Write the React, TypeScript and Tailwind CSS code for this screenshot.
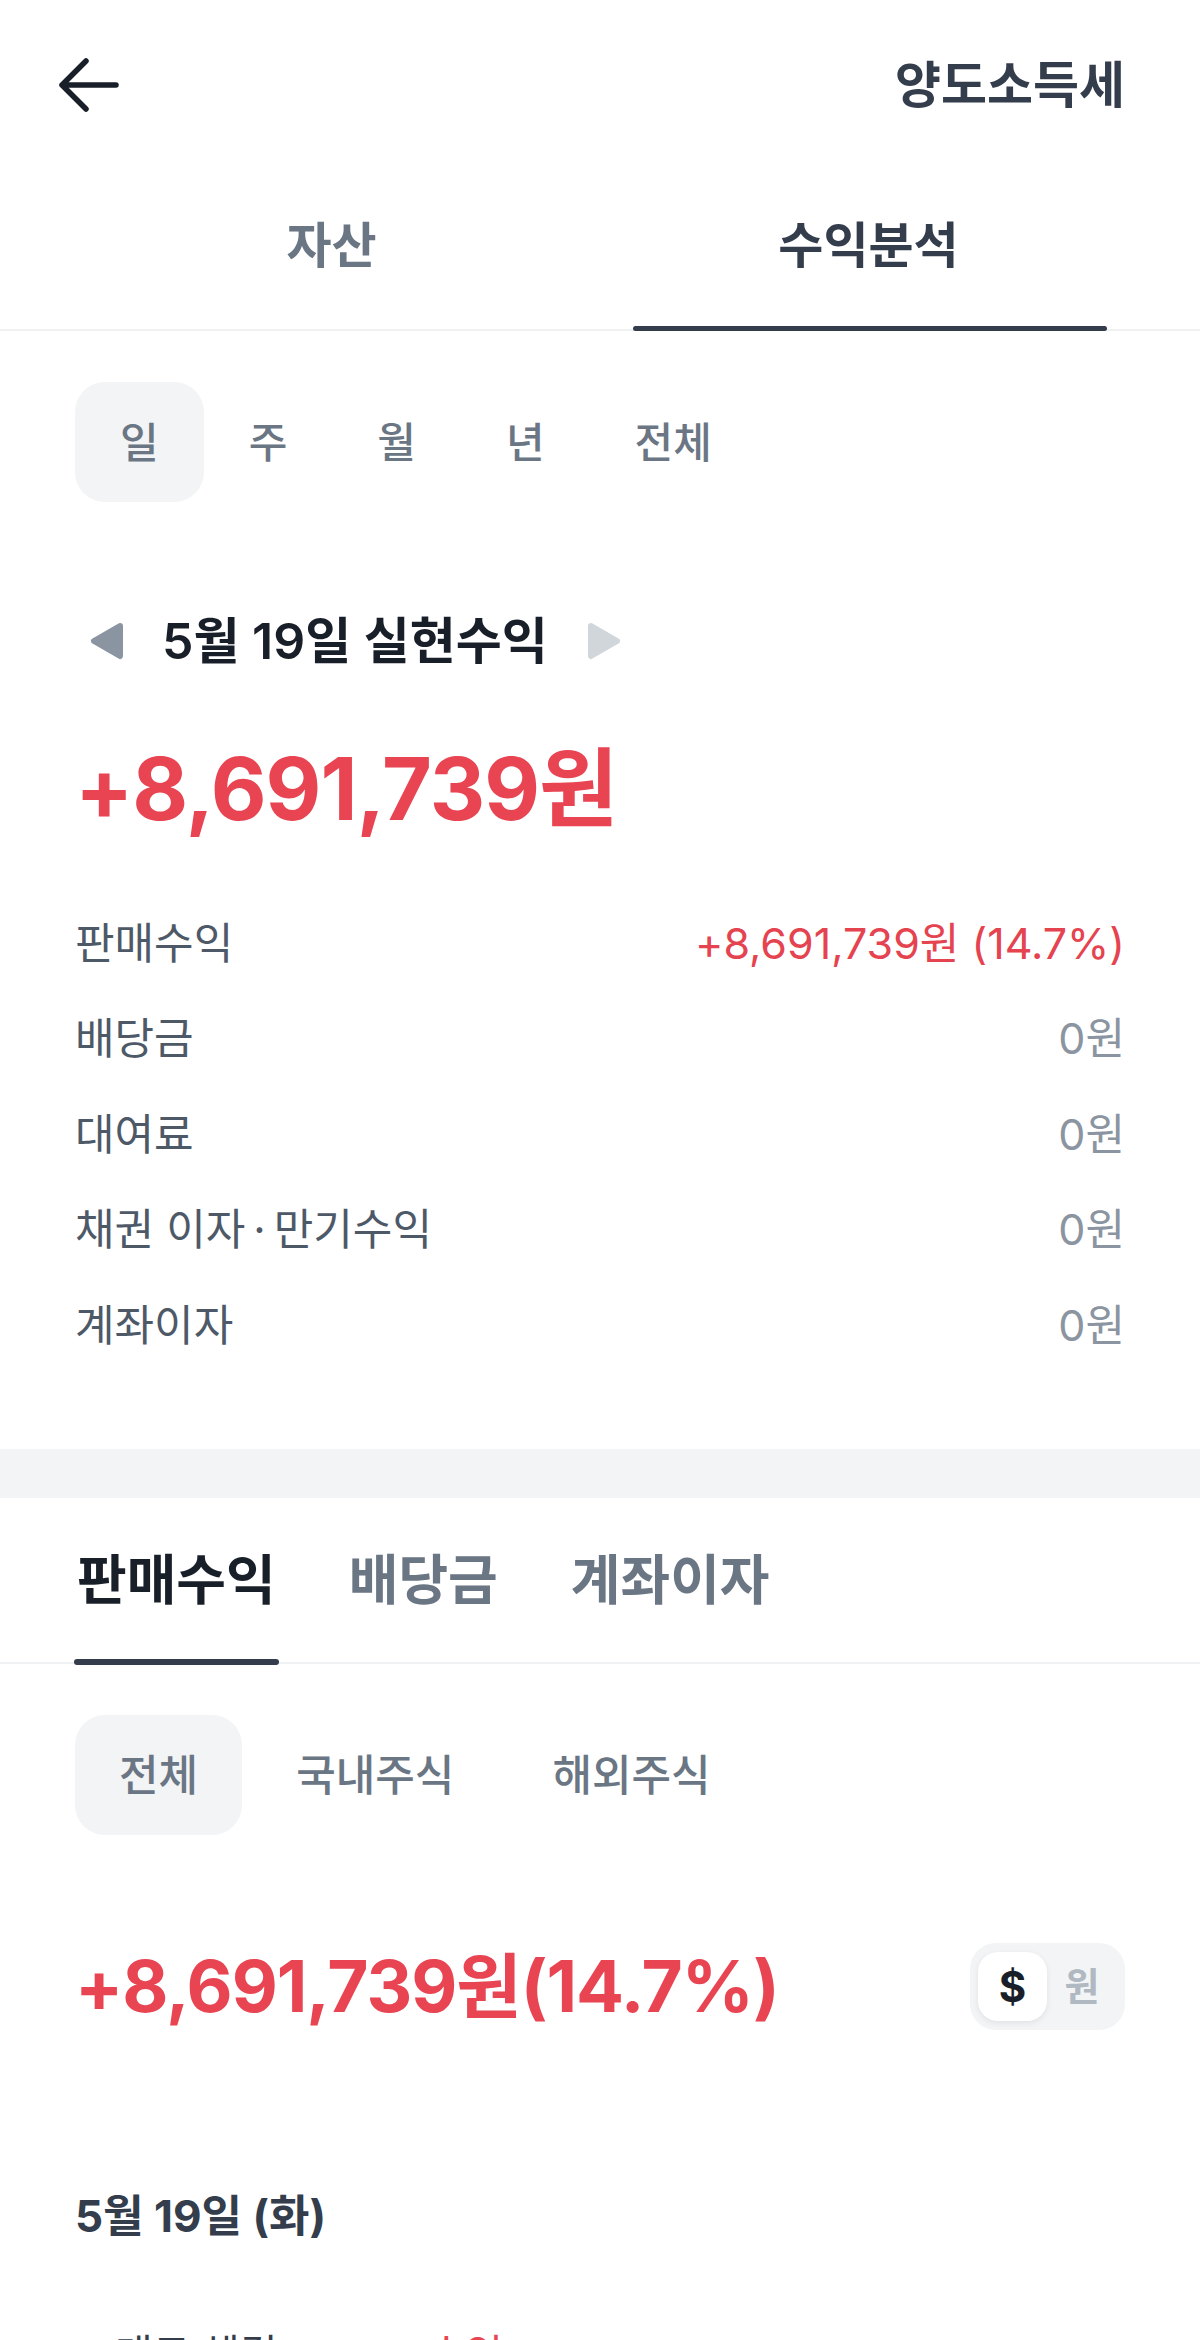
import { useState } from 'react';

type Tab = { id: string; label: string };

const mainTabs: Tab[] = [
  { id: 'asset', label: '자산' },
  { id: 'profit', label: '수익분석' },
];

const periods = ['일', '주', '월', '년', '전체'];

const breakdown = [
  { label: ['판매수익'], value: '+8,691,739원 (14.7%)', positive: true },
  { label: ['배당금'], value: '0원', positive: false },
  { label: ['대여료'], value: '0원', positive: false },
  { label: ['채권 이자', '만기수익'], value: '0원', positive: false },
  { label: ['계좌이자'], value: '0원', positive: false },
];

const detailTabs = ['판매수익', '배당금', '계좌이자'];
const markets = ['전체', '국내주식', '해외주식'];

function BackArrow() {
  return (
    <svg width="64" height="58" viewBox="0 0 64 58" fill="none">
      <path
        d="M30 5L6 29L30 53M6 29H60"
        stroke="#191f28"
        strokeWidth={5.5}
        strokeLinecap="round"
        strokeLinejoin="round"
      />
    </svg>
  );
}

function Triangle({ dir, color }: { dir: 'left' | 'right'; color: string }) {
  const points = dir === 'left' ? '32,5 6,20 32,35' : '6,5 32,20 6,35';
  return (
    <svg width="38" height="40" viewBox="0 0 38 40">
      <polygon points={points} fill={color} stroke={color} strokeWidth={6} strokeLinejoin="round" />
    </svg>
  );
}

export default function App() {
  const [mainTab, setMainTab] = useState('profit');
  const [period, setPeriod] = useState('일');
  const [detailTab, setDetailTab] = useState('판매수익');
  const [market, setMarket] = useState('전체');
  const [unit, setUnit] = useState<'usd' | 'krw'>('usd');

  return (
    <div className="w-[1200px] h-[2340px] overflow-hidden bg-white font-[Inter,'Noto_Sans_CJK_KR',sans-serif]">
      {/* Header */}
      <header className="h-[170px] flex items-center justify-between pl-[56px] pr-[75px]">
        <button className="flex items-center">
          <BackArrow />
        </button>
        <span className="text-[50px] font-semibold text-[#333d4b]">양도소득세</span>
      </header>

      {/* Main tabs */}
      <div className="flex h-[161px] px-[63px] border-b-2 border-[#f0f1f3]">
        {mainTabs.map((tab) => (
          <button
            key={tab.id}
            onClick={() => setMainTab(tab.id)}
            className={`relative flex-1 flex items-center justify-center pb-[7px] text-[49px] ${
              mainTab === tab.id ? 'font-bold text-[#333d4b]' : 'font-semibold text-[#6b7684]'
            }`}
          >
            {tab.label}
            {mainTab === tab.id && (
              <span className="absolute left-[33px] right-[30px] bottom-[-2px] h-[5px] rounded-full bg-[#333d4b]" />
            )}
          </button>
        ))}
      </div>

      {/* Period selector */}
      <div className="flex px-[75px] mt-[51px]">
        {periods.map((p) => (
          <button
            key={p}
            onClick={() => setPeriod(p)}
            className={`h-[120px] px-[45px] flex items-center rounded-[30px] text-[42px] font-medium text-[#6b7684] ${
              period === p ? 'bg-[#f2f4f6]' : ''
            }`}
          >
            {p}
          </button>
        ))}
      </div>

      {/* Date */}
      <div className="mt-[109px] h-[60px] flex items-center pl-[88px]">
        <Triangle dir="left" color="#8b95a1" />
        <span className="ml-[36px] text-[50px] font-semibold text-[#191f28]">5월 19일 실현수익</span>
        <span className="ml-[37px] flex">
          <Triangle dir="right" color="#d1d6db" />
        </span>
      </div>

      {/* Total */}
      <div className="mt-[68px] h-[100px] flex items-center pl-[75px] text-[86px] font-bold leading-none tracking-[-1px] text-[#e84452]">
        +8,691,739원
      </div>

      {/* Breakdown */}
      <div className="mt-[56px] px-[75px]">
        {breakdown.map((row) => (
          <div key={row.label.join('')} className="h-[95.5px] flex items-center justify-between text-[43px]">
            <span className="text-[#4e5968]">
              {row.label[0]}
              {row.label[1] && (
                <>
                  <span className="mx-[8px]">·</span>
                  {row.label[1]}
                </>
              )}
            </span>
            <span className={row.positive ? 'text-[#e5434f]' : 'text-[#8b95a1]'}>{row.value}</span>
          </div>
        ))}
      </div>

      <div className="mt-[76.5px] h-[49px] bg-[#f2f4f6]" />

      {/* Detail tabs */}
      <div className="flex h-[166px] pl-[74px] gap-[67px] border-b-2 border-[#f0f1f3]">
        {detailTabs.map((t) => (
          <button
            key={t}
            onClick={() => setDetailTab(t)}
            className={`relative flex items-center px-[3px] text-[54px] ${
              detailTab === t ? 'font-bold text-[#191f28]' : 'font-semibold text-[#6b7684]'
            }`}
          >
            {t}
            {detailTab === t && (
              <span className="absolute left-0 right-0 bottom-[-3px] h-[6px] rounded-full bg-[#333d4b]" />
            )}
          </button>
        ))}
      </div>

      {/* Market selector */}
      <div className="flex gap-[10px] px-[75px] mt-[51px]">
        {markets.map((m) => (
          <button
            key={m}
            onClick={() => setMarket(m)}
            className={`h-[120px] px-[44px] flex items-center rounded-[30px] text-[43px] font-medium text-[#6b7684] ${
              market === m ? 'bg-[#f2f4f6]' : ''
            }`}
          >
            {m}
          </button>
        ))}
      </div>

      {/* Detail total + unit toggle */}
      <div className="mt-[108px] h-[87px] flex items-center justify-between px-[75px]">
        <span className="text-[71px] font-bold leading-none tracking-[-1px] text-[#e84452]">
          +8,691,739원(14.7%)
        </span>
        <div className="flex px-[8px] py-[9px] rounded-[26px] bg-[#f2f4f6]">
          <button
            onClick={() => setUnit('usd')}
            className={`w-[69px] h-[69px] flex items-center justify-center rounded-[20px] text-[42px] font-bold ${
              unit === 'usd' ? 'bg-white shadow-[0_2px_6px_rgba(0,0,0,0.08)] text-[#191f28]' : 'text-[#b0b8c1]'
            }`}
          >
            $
          </button>
          <button
            onClick={() => setUnit('krw')}
            className={`w-[70px] h-[69px] flex items-center justify-center rounded-[20px] text-[38px] font-bold ${
              unit === 'krw' ? 'bg-white shadow-[0_2px_6px_rgba(0,0,0,0.08)] text-[#191f28]' : 'text-[#b0b8c1]'
            }`}
          >
            원
          </button>
        </div>
      </div>

      {/* Day group */}
      <div className="mt-[161px] h-[50px] flex items-center pl-[75px] text-[44px] font-bold text-[#333d4b]">
        5월 19일 (화)
      </div>

      <div className="mt-[84px] h-[60px] flex items-center pl-[115px] text-[41px]">
        <span className="text-[#333d4b]">매도 체결</span>
        <span className="ml-[150px] text-[#e84452]">수익</span>
      </div>
    </div>
  );
}
